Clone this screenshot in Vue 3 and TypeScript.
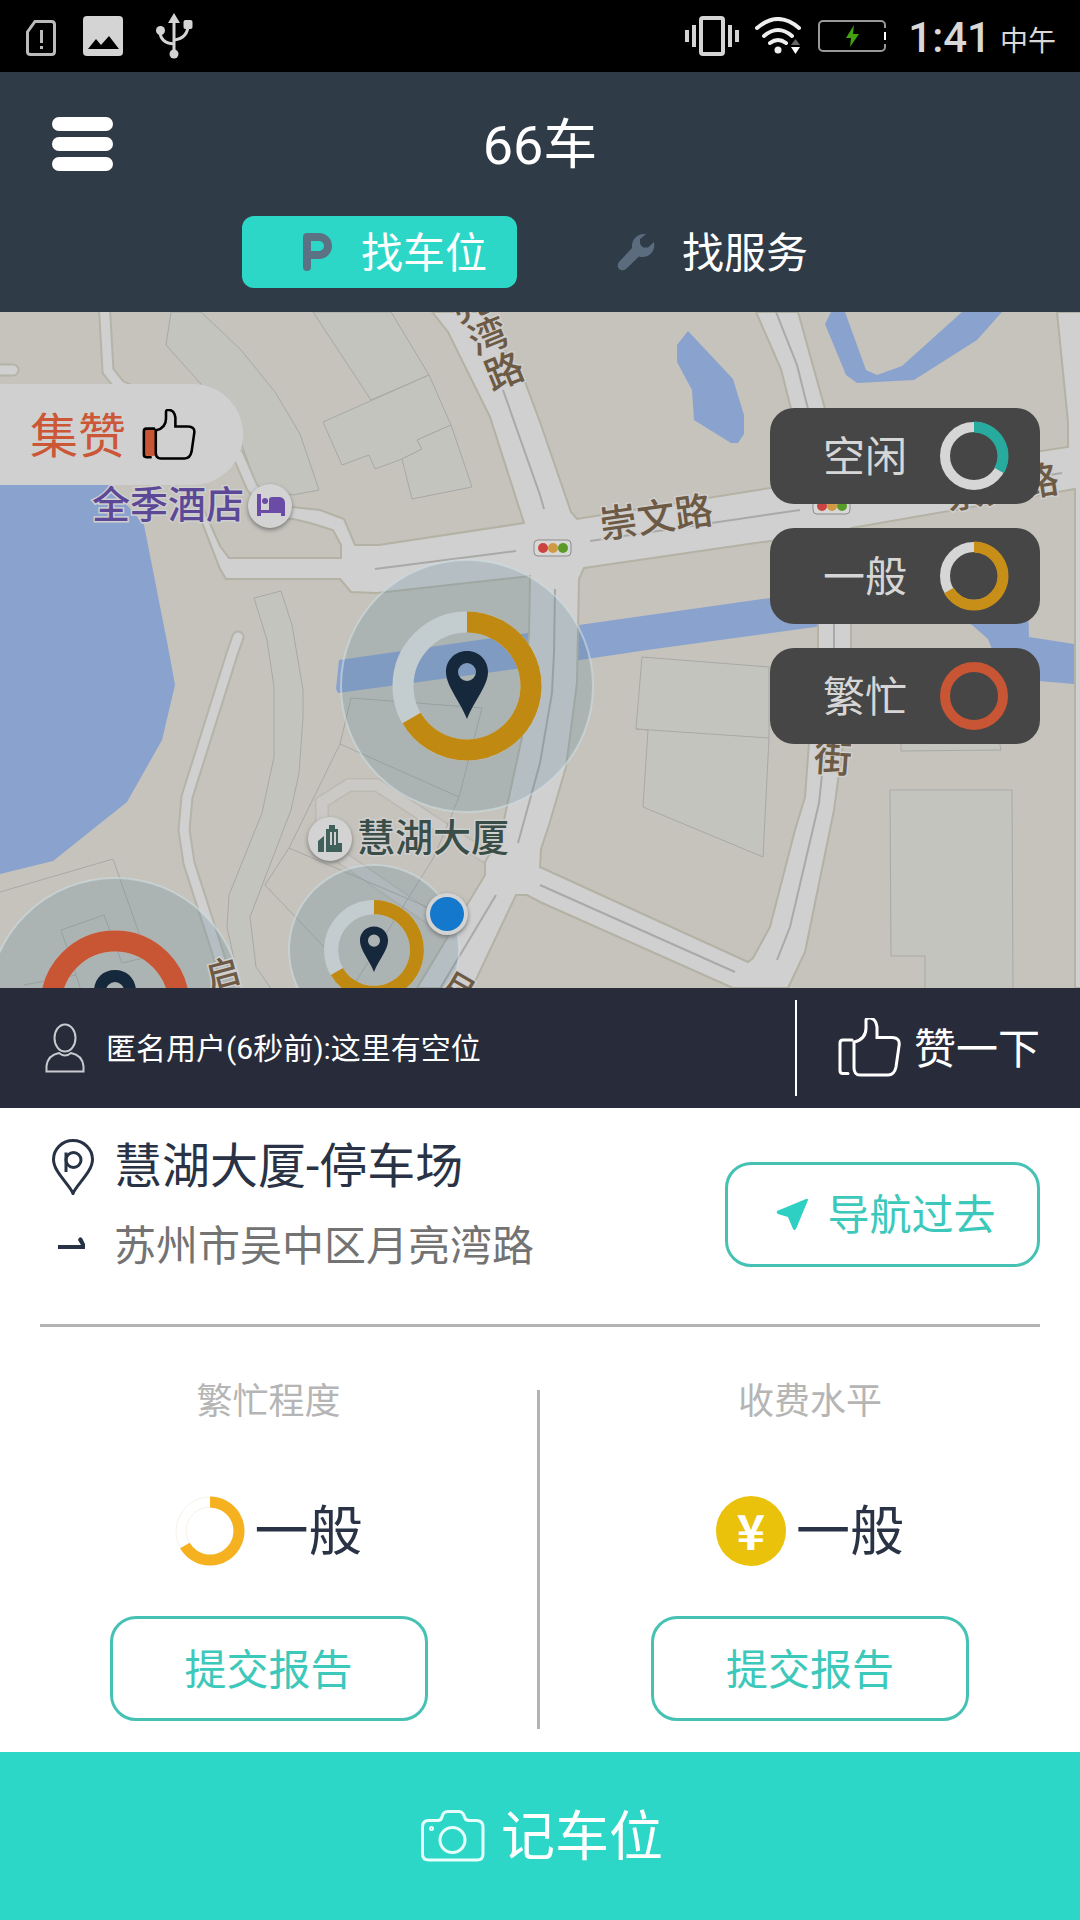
<script setup lang="ts">
interface Level {
  label: string
  color: string
  share: number
}

interface Report {
  title: string
  kind: 'ring' | 'coin'
  value: string
}

interface Spot {
  x: number
  y: number
  halo: number
  scale: number
  color: string
  share: number
}

const levels: Level[] = [
  { label: '空闲', color: '#27ab9f', share: 1 / 3 },
  { label: '一般', color: '#c88f18', share: 2 / 3 },
  { label: '繁忙', color: '#c85533', share: 1 },
]

const reports: Report[] = [
  { title: '繁忙程度', kind: 'ring', value: '一般' },
  { title: '收费水平', kind: 'coin', value: '一般' },
]

const spots: Spot[] = [
  { x: 467, y: 686, halo: 126, scale: 1, color: '#c08a12', share: 2 / 3 },
  { x: 374, y: 950, halo: 85, scale: 0.67, color: '#c08a12', share: 2 / 3 },
  { x: 115, y: 1005, halo: 127, scale: 1, color: '#c85533', share: 1 },
]

const casings: string[] = [
  'M104 300 L108 371 L120 386 L200 420 L238 455 L252 487 L272 512',
  'M-6 370 H13',
  'M238 637 L232 654 L187 797 L184 830 L189 863 L222 966',
]

const lanes: string[] = [
  'M375 569 L516 551',
  'M503 390 L540 495 L544 509',
  'M590 541 L800 510',
  'M776 312 L797 365 L808 409',
  'M834 600 V690 L822 775 L819 803 L790 927 L777 960',
  'M540 885 L735 972',
  'M555 589 L554 652 L552 693 L540 763 L518 843',
  'M496 895 L438 992',
  'M1030 478 L1062 473',
]

const roadArea =
  'M432 312 L448 332 L490 417 L524 523 L379 545 L355 545 L344 519 L320 510 L292 507 L262 505 L262 519 L293 519 L310 523 L333 530 L341 545 L341 558 L229 558 L220 546 L208 519 L200 500 L190 500 L201 520 L220 569 L226 579 L340 579 L351 592 L377 593 L530 576 L529 633 L522 737 L504 820 L498 840 L485 862 V875 L417 988 L472 988 L516 895 H527 L540 902 L733 988 H788 L805 952 L834 810 L839 773 L851 690 V528 L1075 489 V988 H1084 V312 H1057 L1068 422 V447 L838 481 L825 409 L798 312 H756 L781 369 L791 409 L802 484 L770 488 L577 519 L571 512 L540 422 L525 382 L480 312 Z M584 568 L818 534 V690 L809 743 L805 797 L795 830 L770 927 L753 958 L748 962 L540 867 L541 849 L549 825 L566 767 L577 683 L579 579 Z'

const plots: string[] = [
  'M171 312 L166 345 L201 384 L240 440 L258 489 L293 495 L319 490 L300 434 L275 392 L241 350 L201 312 Z',
  'M313 312 L371 400 L429 375 L391 312 Z',
  'M323 422 L429 375 L451 425 L417 440 L422 449 L402 459 L375 469 L369 455 L342 465 Z',
  'M402 459 L422 449 L417 440 L451 425 L472 487 L412 499 Z',
  'M254 598 L281 591 L292 625 L303 690 V717 L299 773 L291 810 L250 917 L256 967 L272 990 L241 990 L227 927 L229 895 L262 813 L274 757 V687 L267 640 Z',
  'M642 657 L769 667 V738 L763 857 L643 807 L648 730 L636 729 Z',
  'M890 790 H1012 L1013 990 H925 V956 H891 Z',
  'M901 740 V751 L1001 750 L999 740 Z',
]

const thinLines: string[] = [
  'M636 729 L769 738',
  'M0 892 L113 859 L145 950',
  'M81 990 L61 930 L104 915 L122 963 L148 957',
  'M24 985 L76 975',
  'M351 698 L482 708 L459 797 L340 744 Z',
  'M340 744 L289 848 L265 885 L324 947',
  'M289 848 L427 907',
  'M459 797 L434 857 L355 983',
]

function arc(cx: number, cy: number, r: number, share: number): string {
  const a = share * Math.PI * 2
  const x = cx + r * Math.sin(a)
  const y = cy - r * Math.cos(a)
  return `M${cx} ${cy - r} A${r} ${r} 0 ${share > 0.5 ? 1 : 0} 1 ${x} ${y}`
}
</script>

<template>
  <div class="app">
    <div class="status">
      <svg class="st-sim" viewBox="0 0 30 36"><path d="M9 1.5H25.500Q28.500 1.500 28.500 4.500V31.500Q28.500 34.500 25.500 34.500H4.500Q1.500 34.500 1.500 31.500V12Z" /><path d="M15.500 10V23M15.500 26V29" /></svg>
      <svg class="st-pic" viewBox="0 0 40 40"><rect width="40" height="40" rx="4" fill="#d4d4d4" /><path d="M5 33 L13 23 L18 29 L26 20 L36 33Z" fill="#000" /></svg>
      <svg class="st-usb" viewBox="0 0 37 46">
        <path d="M18 6V40M4 18Q4 30 18 31M32 12Q32 25 18 27" fill="none" stroke="#d4d4d4" stroke-width="3" />
        <path d="M18 0L24 10H12Z" fill="#d4d4d4" /><circle cx="4.500" cy="17.500" r="4.500" fill="#d4d4d4" /><circle cx="18" cy="41" r="4.500" fill="#d4d4d4" /><rect x="27.500" y="7" width="9" height="9" rx="2" fill="#d4d4d4" />
      </svg>
      <span class="spacer"></span>
      <svg class="st-vib" viewBox="0 0 54 40"><rect x="16" y="2" width="22" height="36" rx="2" fill="none" stroke="#d4d4d4" stroke-width="4" /><path d="M2 14V26M9 9V31M45 9V31M52 14V26" stroke="#d4d4d4" stroke-width="4" /></svg>
      <svg class="st-wifi" viewBox="0 0 46 38">
        <path d="M2 11Q23 -7 44 11M9 19Q23 7 37 19M15 26Q23 20 31 26" fill="none" stroke="#eee" stroke-width="4" stroke-linecap="round" />
        <circle cx="23" cy="33" r="3.500" fill="#eee" /><path d="M36 28L40.500 22L45 28Z" fill="#666" /><path d="M36 30H45L40.500 37Z" fill="#fff" />
      </svg>
      <svg class="st-bat" viewBox="0 0 68 32"><rect x="1" y="1" width="66" height="30" rx="4" fill="none" stroke="#999" stroke-width="2" /><path d="M67 8V24" stroke="#000" stroke-width="3" /><path d="M67 12V20" stroke="#fff" stroke-width="2" /><path d="M36 5L28 18H33L32 27L41 14H35Z" fill="#43a011" /></svg>
      <span class="clock">1:41</span><span class="noon">中午</span>
    </div>

    <header class="header">
      <div class="title-row">
        <button class="menu" type="button" aria-label="菜单"><i></i><i></i><i></i></button>
        <h1>66车</h1>
      </div>
      <nav class="tabs">
        <button class="tab active" type="button">
          <svg viewBox="0 0 44 44"><path d="M12 37V7H24A8 8 0 0 1 24 25H12" fill="none" stroke="#5b7184" stroke-width="8" stroke-linecap="round" stroke-linejoin="round" /></svg>
          <span>找车位</span>
        </button>
        <button class="tab" type="button">
          <svg viewBox="-1 -3 44 44"><path d="M29 1C20 0 14 7 15 15L2 29C-2 34 4 40 9 36L22 23.500C31 26 39 19 37 9L31 14.500H26L23 11V6Z" fill="#5b6c7e" /></svg>
          <span>找服务</span>
        </button>
      </nav>
    </header>

    <main class="map">
      <svg class="canvas" viewBox="0 312 1080 676" preserveAspectRatio="xMidYMid slice">
        <rect y="300" width="1080" height="700" fill="#c5c3bb" />
        <g fill="#8aa2ce">
          <path d="M0 450H90L113 485L127 505L144 525L169 652L175 685L162 740L127 802L53 861L0 874Z" />
          <path d="M339 660L528 633L579 625L770 598L960 575L1028 600L1029 637L1074 644V684L1039 681L1000 670L988 639L972 625L940 608L815 627L647 650L580 660L516 669L338 693L336 689Z" />
          <path d="M688 331L677 345V362L692 390L694 420L731 443H738L744 434V415L733 379Z" />
          <path d="M831 312L825 324L846 375L857 383L914 380L977 340L1002 312H962L902 366L877 375L866 370L845 312Z" />
        </g>
        <g class="plots"><path v-for="d in plots" :key="d" :d="d" /></g>
        <g class="side-road">
          <path class="edge" d="M322 825V802L349 785H377L500 866M341 857L440 925" />
          <path class="core" d="M322 825V802L349 785H377L500 866M341 857L440 925" />
        </g>
        <g class="thin"><path v-for="d in thinLines" :key="d" :d="d" /></g>
        <path v-for="d in casings" :key="'e' + d" :d="d" class="lane-edge" />
        <path :d="roadArea" class="road" />
        <path v-for="d in casings" :key="'c' + d" :d="d" class="lane-core" />
        <g class="lanes"><path v-for="d in lanes" :key="d" :d="d" /></g>

        <g v-for="p in [[533, 540], [812, 498]]" :key="p[0]" :transform="`translate(${p[0]} ${p[1]})`">
          <rect x="1" y="0" width="37" height="16" rx="4" fill="#d8d8d8" stroke="#8b8b8b" />
          <circle cx="10" cy="8" r="5" fill="#cb4440" /><circle cx="20" cy="8" r="5" fill="#d09a43" /><circle cx="30" cy="8" r="5" fill="#5a9a28" />
        </g>

        <g class="road-name">
          <text transform="translate(470 303) rotate(-24)" y="14">亮</text>
          <text transform="translate(488 336) rotate(-22)" y="14">湾</text>
          <text transform="translate(504 371) rotate(-22)" y="14">路</text>
          <text transform="translate(656 517) rotate(-8)" y="14">崇文路</text>
          <text transform="translate(1002 487) rotate(-9)" y="14">崇文路</text>
          <text transform="translate(833 758) rotate(4)" y="14">街</text>
        </g>
        <g v-for="s in spots" :key="s.x">
          <circle :cx="s.x" :cy="s.y" :r="s.halo" fill="#65879b" fill-opacity=".25" stroke="#cfdde2" stroke-opacity=".6" stroke-width="2" />
          <g :transform="`translate(${s.x} ${s.y}) scale(${s.scale})`">
            <circle r="64" fill="none" stroke="#c3cccf" stroke-width="21" />
            <circle v-if="s.share === 1" r="64" fill="none" :stroke="s.color" stroke-width="21" />
            <path v-else :d="arc(0, 0, 64, s.share)" fill="none" :stroke="s.color" stroke-width="21" />
            <path fill="#16293c" fill-rule="evenodd" d="M0-35C-13-35-21-25-21-14C-21 0-7 15 0 33C7 15 21 0 21-14C21-25 13-35 0-35ZM0-23A9 9 0 1 1 0-5A9 9 0 1 1 0-23Z" />
          </g>
        </g>
        <g class="road-name">
          <text transform="translate(223 974) rotate(-15)" y="12" class="small">启</text>
          <text transform="translate(458 989) rotate(30)" y="12" class="small">月</text>
        </g>
        <text class="poi hotel" x="168" y="518">全季酒店</text>
        <text class="poi tower" x="433" y="851">慧湖大厦</text>
        <g class="poi-dot">
          <circle cx="270" cy="506" r="22" /><circle cx="330" cy="839" r="22" />
        </g>
        <path d="M257 494H261V510H269V500Q269 497 272 497H280Q285 498 285 503V516H281V513H261V516H257Z" fill="#6a4ba5" /><circle cx="265" cy="501" r="3" fill="#6a4ba5" />
        <path d="M318 852V841L324 836V852ZM326 852V829H329V825H335V829H338V843H342V852Z" fill="#40605a" /><path d="M331 832V845M335 832V845" stroke="#d0d0d0" stroke-width="2" />
        <g class="poi-dot"><circle cx="447" cy="914" r="21" /></g><circle cx="447" cy="914" r="17" fill="#1478cc" />
      </svg>

      <button class="collect" type="button">
        <span>集赞</span>
        <svg viewBox="0 1 63 61"><path d="M3 24H16V56H3Z" fill="#c85533" /><path d="M14 24H5Q2 24 2 27V54.500Q2 57.500 5 57.500H10M16.500 26C24 24 28 20 28 12V4C28 1 36 1 38 7L39 11V21.500H54C60 21.500 62 25 61 30L58 51C57 56 54 59 50 59H22C18 59 16 56 16 52V26" fill="none" stroke="#000" stroke-width="3" stroke-linecap="round" /></svg>
      </button>

      <ul class="legend">
        <li v-for="l in levels" :key="l.label">
          <span>{{ l.label }}</span>
          <svg viewBox="0 0 70 70">
            <circle cx="35" cy="35" r="29" fill="none" :stroke="l.share === 1 ? l.color : '#d6d6d6'" stroke-width="10" />
            <path v-if="l.share < 1" :d="arc(35, 35, 29, l.share)" fill="none" :stroke="l.color" stroke-width="11" />
          </svg>
        </li>
      </ul>
    </main>

    <section class="feed">
      <svg class="user" viewBox="0 0 40 50"><ellipse cx="20" cy="15" rx="10.500" ry="13.500" /><path d="M1.500 48.500V43Q3 32 14 30Q20 35 26 30Q37 32 38.500 43V48.500Z" /></svg>
      <p>匿名用户(6秒前):这里有空位</p>
      <button class="like" type="button">
        <svg viewBox="0 2 63 61"><path d="M14 24H5Q2 24 2 27V54.500Q2 57.500 5 57.500H10M16.500 26C24 24 28 20 28 12V4C28 1 36 1 38 7L39 11V21.500H54C60 21.500 62 25 61 30L58 51C57 56 54 59 50 59H22C18 59 16 56 16 52V26" fill="none" stroke="#fff" stroke-width="3" stroke-linecap="round" /></svg>
        <span>赞一下</span>
      </button>
    </section>

    <section class="place">
      <div class="info">
        <div class="line name">
          <svg viewBox="0 0 54 56"><path d="M27 54.500C24 46 7.500 33 7.500 20.500A19.500 19 0 0 1 46.500 20.500C46.500 33 30 46 27 54.500Z" /><circle cx="27.500" cy="21" r="7.500" /><path d="M20 13.500V33" /></svg>
          <h2>慧湖大厦-停车场</h2>
        </div>
        <div class="line addr">
          <svg viewBox="0 0 54 56"><path d="M12 26H35L32 21Q33 17 36 19L39 25V30H12Z" /></svg>
          <p>苏州市吴中区月亮湾路</p>
        </div>
      </div>
      <button class="outline nav" type="button">
        <svg viewBox="0 0 34 34"><path d="M31 2L2 14Q1 16 3 17L13 20L18 32Q19 34 21 32L33 3Q33 1 31 2Z" fill="#2dd0c2" /></svg>
        <span>导航过去</span>
      </button>
    </section>

    <section class="reports">
      <article v-for="r in reports" :key="r.title" class="report">
        <h3>{{ r.title }}</h3>
        <div class="value">
          <svg v-if="r.kind === 'ring'" viewBox="0 0 70 70">
            <circle cx="35" cy="35" r="34" fill="none" stroke="#f8f3e8" /><circle cx="35" cy="35" r="24" fill="none" stroke="#f8f3e8" />
            <path :d="arc(35, 35, 29, 2 / 3)" fill="none" stroke="#f5b120" stroke-width="11" />
          </svg>
          <i v-else class="coin">¥</i>
          <span>{{ r.value }}</span>
        </div>
        <button class="outline" type="button"><span>提交报告</span></button>
      </article>
    </section>

    <button class="record" type="button">
      <svg viewBox="0 0 64 52"><path d="M7 10.500H17Q20 10.500 21 7Q22 1.500 27 1.500H38Q42 1.500 43.500 7Q44.500 10.500 48 10.500H56Q62 11 62 17V44Q62 50 56 50H8Q1.500 50 1.500 44V17Q1.500 11 7 10.500Z" /><circle cx="31.500" cy="30" r="12.500" /><circle cx="10.500" cy="18.500" r="1" /></svg>
      <span>记车位</span>
    </button>
  </div>
</template>

<style>
body {
  margin: 0;
}
</style>

<style scoped>
.app {
  display: flex;
  flex-direction: column;
  min-height: 100vh;
  background: #fff;
  font-family: Roboto, "Noto Sans CJK SC", sans-serif;
}
.app * {
  box-sizing: border-box;
}
button {
  border: 0;
  padding: 0;
  background: none;
  color: inherit;
  font-family: inherit;
}
h1, h2, h3, p, ul {
  margin: 0;
  padding: 0;
  font-weight: 400;
}
/* Chinese glyphs sit high in a Roboto line box, so labels are lowered a little */
h1, button span, .legend span, .value span {
  padding-top: 4px;
}
svg {
  display: block;
  flex: none;
}

.status {
  display: flex;
  align-items: center;
  height: 72px;
  padding: 0 24px 0 26px;
  background: #000;
  color: #d8d8d8;
}
.st-sim { width: 30px; height: 36px; fill: none; stroke: #bbb; stroke-width: 3; margin-top: 4px; }
.st-pic { width: 40px; height: 40px; margin-left: 27px; }
.st-usb { width: 37px; height: 46px; margin-left: 33px; }
.spacer { flex: 1; }
.st-vib { width: 54px; height: 40px; }
.st-wifi { width: 46px; height: 38px; margin-left: 16px; }
.st-bat { width: 68px; height: 32px; margin-left: 17px; }
.clock { margin-left: 22px; padding-top: 4px; font-size: 42px; font-weight: 500; line-height: 72px; }
.noon { margin-left: 9px; padding-top: 12px; font-size: 28px; line-height: 64px; }

.header {
  height: 240px;
  background: #2f3b47;
  color: #fff;
}
.title-row {
  display: grid;
  grid-template-columns: 1fr auto 1fr;
  align-items: center;
  height: 144px;
  padding: 0 52px;
}
.menu {
  display: flex;
  flex-direction: column;
  gap: 6px;
  width: 61px;
}
.menu i {
  height: 14px;
  border-radius: 7px;
  background: #fff;
}
h1 {
  font-size: 54px;
  line-height: 72px;
}
.tabs {
  display: flex;
  justify-content: center;
  gap: 46px;
}
.tab {
  display: flex;
  align-items: center;
  gap: 22px;
  width: 275px;
  height: 72px;
  padding-left: 53px;
  border-radius: 12px;
  font-size: 42px;
  line-height: 68px;
}
.tab.active { background: #2dd7c8; }
.tab svg { width: 44px; height: 44px; }

.map {
  position: relative;
  flex: 1;
  min-height: 480px;
  overflow: hidden;
}
.canvas {
  position: absolute;
  width: 100%;
  height: 100%;
}
.plots path { fill: #c4c4bf; stroke: #a8a8a5; }
.thin path { fill: none; stroke: #a8a8a5; }
.road { fill: #d0d0d0; stroke: #b3b2a4; stroke-width: 2; fill-rule: evenodd; }
.lane-edge { fill: none; stroke: #b5b4a8; stroke-width: 13; stroke-linecap: round; }
.lane-core { fill: none; stroke: #d0d0d0; stroke-width: 9; stroke-linecap: round; }
.lanes path { fill: none; stroke: #a9a9a8; stroke-width: 2; }
.side-road path { fill: none; }
.side-road .edge { stroke: #bbb9b2; stroke-width: 14; }
.side-road .core { stroke: #cac9c6; stroke-width: 11; }
.canvas text {
  font-size: 38px;
  font-weight: 500;
  text-anchor: middle;
  paint-order: stroke;
  stroke: #cfcfcf;
  stroke-width: 3px;
}
.canvas .small { font-size: 34px; }
.road-name { fill: #6d5a45; }
.hotel { fill: #5c4896; }
.tower { fill: #3a4d46; }
.poi-dot { fill: #d3d3d3; filter: drop-shadow(0 2px 2px #777); }

.collect {
  position: absolute;
  top: 72px;
  left: 0;
  display: flex;
  align-items: center;
  gap: 16px;
  height: 101px;
  padding: 0 47px 0 30px;
  border-radius: 0 50px 50px 0;
  background: #d0d0d0;
  color: #cc5736;
  font-size: 48px;
  line-height: 72px;
}
.collect svg { width: 54px; height: 52px; }

.legend {
  position: absolute;
  top: 96px;
  right: 40px;
  display: flex;
  flex-direction: column;
  gap: 24px;
  list-style: none;
}
.legend li {
  display: flex;
  align-items: center;
  justify-content: flex-end;
  gap: 32px;
  width: 270px;
  height: 96px;
  padding-right: 31px;
  border-radius: 24px;
  background: #464646;
  color: #d6d6d6;
  font-size: 42px;
  line-height: 72px;
}
.legend svg { width: 70px; height: 70px; }

.feed {
  display: flex;
  align-items: center;
  height: 120px;
  padding: 0 40px 0 45px;
  background: #282c3a;
  color: #fff;
}
.user { width: 40px; height: 50px; fill: none; stroke: #c9cad0; stroke-width: 2; }
.feed p { margin-left: 21px; padding-top: 2px; font-size: 30px; line-height: 48px; }
.like {
  display: flex;
  align-items: center;
  gap: 13px;
  height: 96px;
  margin-left: auto;
  padding-left: 41px;
  border-left: 2px solid #fff;
  font-size: 42px;
  line-height: 72px;
}
.like svg { width: 63px; height: 61px; }

.place {
  display: flex;
  align-items: center;
  justify-content: space-between;
  height: 219px;
  margin: 0 40px;
  padding-bottom: 4px;
  border-bottom: 3px solid #b3b3b3;
}
.info { padding-bottom: 18px; }
.line {
  display: flex;
  align-items: center;
  gap: 14px;
  padding-left: 6px;
}
.line svg { width: 54px; height: 56px; }
.name { height: 84px; color: #2a3345; }
.name svg { fill: none; stroke: #273244; stroke-width: 3; }
.name h2 { font-size: 48px; line-height: 72px; }
.addr { height: 76px; color: #737373; }
.addr svg { fill: #273244; }
.addr p { font-size: 42px; line-height: 72px; }

.outline {
  display: flex;
  align-items: center;
  justify-content: center;
  gap: 18px;
  width: 318px;
  height: 105px;
  border: 3px solid #46c2b5;
  border-radius: 26px;
  color: #3cc8ba;
  font-size: 42px;
  line-height: 72px;
}
.nav svg { width: 34px; height: 34px; }
.nav { width: 315px; padding-left: 6px; }

.reports {
  display: grid;
  grid-template-columns: 1fr 1fr;
  padding: 63px 0 23px;
}
.report {
  display: flex;
  flex-direction: column;
  align-items: center;
  height: 339px;
  padding-bottom: 8px;
}
.report:first-child { border-right: 3px solid #b3b3b3; }
h3 {
  margin-top: -12px;
  color: #b5b5b5;
  font-size: 36px;
  line-height: 48px;
}
.value {
  display: flex;
  align-items: center;
  gap: 10px;
  margin: auto 0;
  padding-top: 20px;
  color: #2a3345;
  font-size: 54px;
  line-height: 72px;
}
.value svg { width: 70px; height: 70px; }
.coin {
  width: 70px;
  height: 70px;
  border-radius: 50%;
  background: #ebc20b;
  color: #fff;
  font-family: "Noto Sans CJK SC", sans-serif;
  font-size: 48px;
  font-style: normal;
  font-weight: 700;
  line-height: 66px;
  text-align: center;
}

.record {
  display: flex;
  align-items: center;
  justify-content: center;
  gap: 16px;
  height: 168px;
  padding-left: 4px;
  background: #2dd7c8;
  color: #fff;
  font-size: 54px;
  line-height: 72px;
}
.record svg { width: 64px; height: 52px; fill: none; stroke: #e6fffc; stroke-width: 3; }
</style>
